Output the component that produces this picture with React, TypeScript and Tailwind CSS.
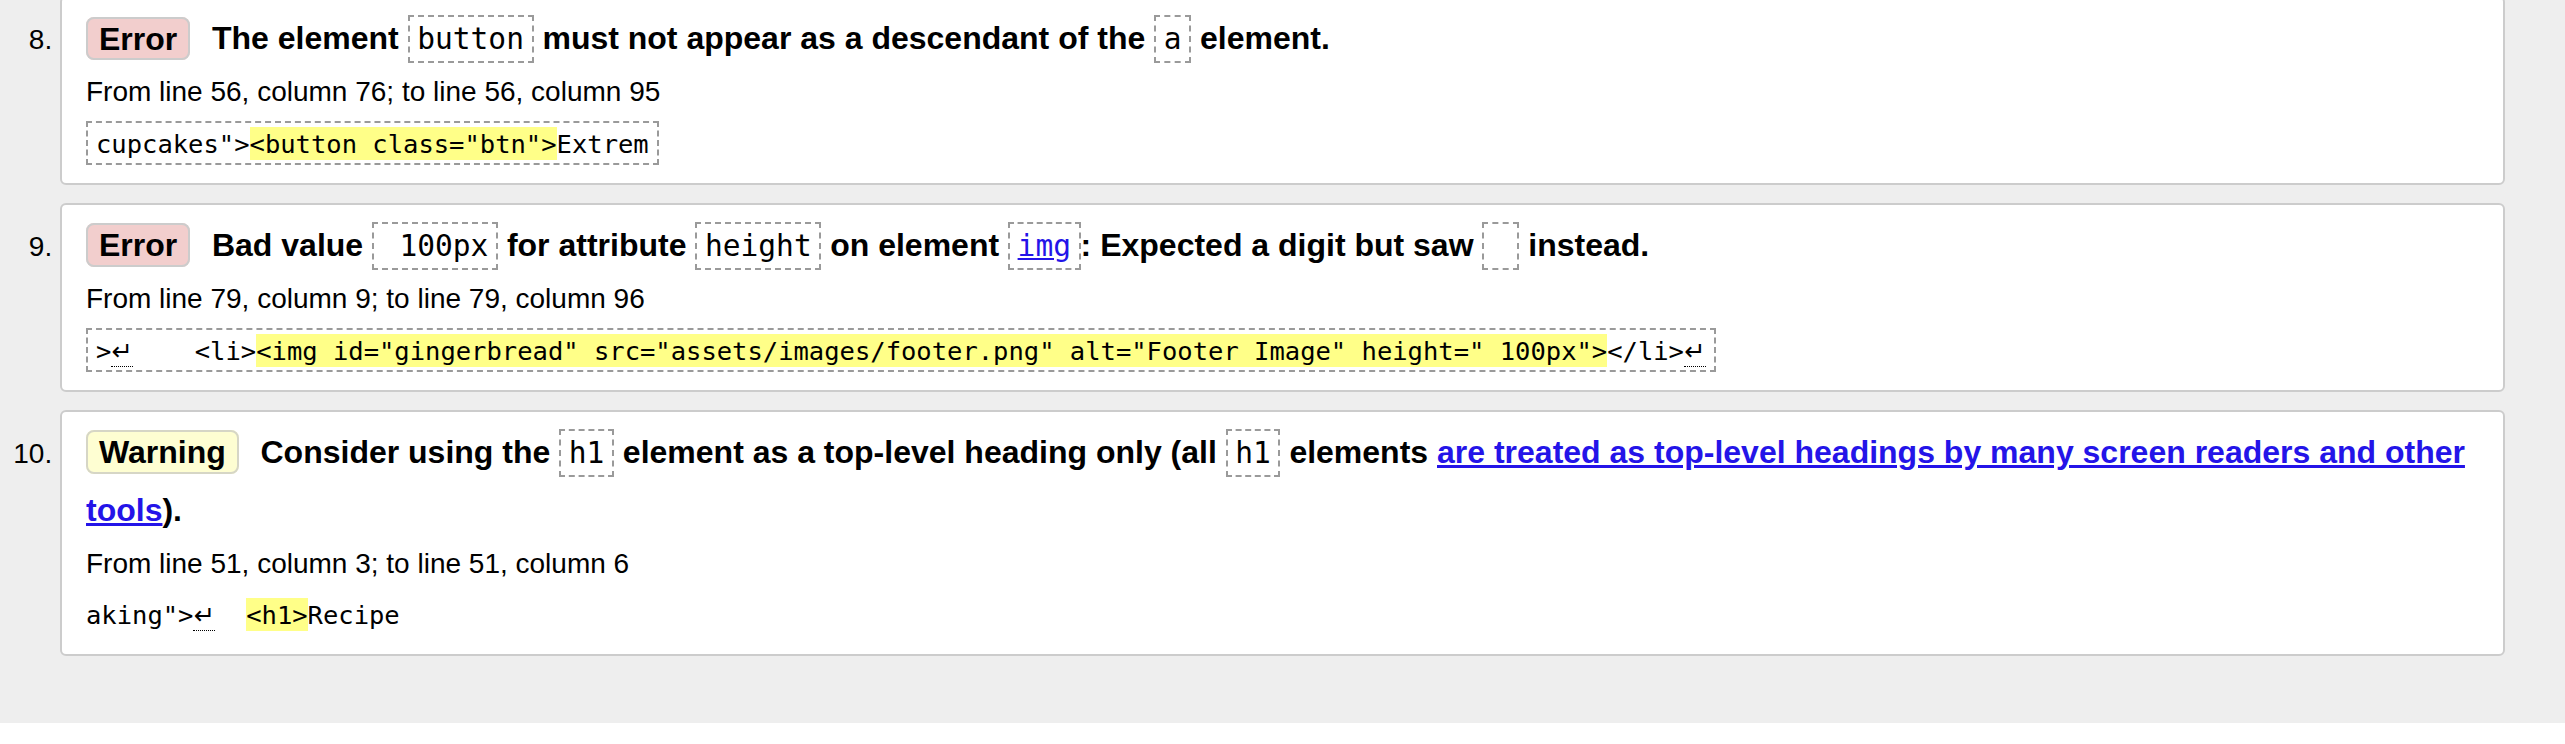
import React from "react";

const Badge = ({ kind }: { kind: "Error" | "Warning" }) => (
  <>
    <span
      className={
        kind === "Error"
          ? "mr-[12.8px] rounded-[8px] border-2 border-[#cccccc] bg-[#f2cecd] px-[11px] pt-[1.7px] pb-[2.2px]"
          : "mr-[12.8px] rounded-[8px] border-2 border-[#d6d6c6] bg-[#fefed2] px-[11px] pt-[1.7px] pb-[2.2px]"
      }
    >
      {kind}
    </span>{" "}
  </>
);

const Code = ({ children }: { children: React.ReactNode }) => (
  <code className="whitespace-pre border-2 border-dashed border-[#9a9a9a] px-[7.6px] pt-[5px] pb-[5px] font-['DejaVu_Sans_Mono',monospace] text-[29.57px] font-normal leading-none">
    {children}
  </code>
);

const HL = ({ children }: { children: React.ReactNode }) => (
  <span className="bg-[#ffff88] pt-[2px] pb-[0.7px] leading-none">{children}</span>
);

const LF = () => (
  <span className="inline-block w-[22px] overflow-visible border-b-[1.5px] border-dotted border-black font-['DejaVu_Sans',sans-serif] text-[25.5px] leading-[29px]">
    ↵
  </span>
);

const Box = ({ children }: { children: React.ReactNode }) => (
  <span className="border-2 border-dashed border-[#9a9a9a] px-[8px] pt-[5.7px] pb-[4.6px] leading-none">
    {children}
  </span>
);

const Card = ({
  heading,
  from,
  extract,
}: {
  heading: React.ReactNode;
  from: string;
  extract: React.ReactNode;
}) => (
  <li className="rounded-[6px] border-2 border-[#cccccc] bg-white pl-[24px] pr-[5px] pt-[12.2px] pb-[18.8px] text-[28px]">
    <p className="text-[32px] font-bold leading-[57.4px]">{heading}</p>
    <p className="mt-[4.7px] leading-[40px]">{from}</p>
    <p className="mt-[11.58px] whitespace-pre font-['DejaVu_Sans_Mono',monospace] text-[25.5px] leading-[40px]">
      {extract}
    </p>
  </li>
);

export default function App() {
  return (
    <div className="-mt-[4px] bg-[#eeeeee] pb-[66.6px] font-['Liberation_Sans',Arial,sans-serif] text-black">
      <ol start={8} className="mx-[60px] list-decimal space-y-[18.3px]">
        <Card
          heading={
            <>
              <Badge kind="Error" />
              The element <Code>button</Code> must not appear as a descendant of the <Code>a</Code> element.
            </>
          }
          from="From line 56, column 76; to line 56, column 95"
          extract={
            <Box>
              {'cupcakes">'}
              <HL>{'<button class="btn">'}</HL>
              {"Extrem"}
            </Box>
          }
        />
        <Card
          heading={
            <>
              <Badge kind="Error" />
              Bad value <Code>{" 100px"}</Code> for attribute <Code>height</Code> on element{" "}
              <Code>
                <a href="#" className="text-[#2414e8] underline">
                  img
                </a>
              </Code>
              : Expected a digit but saw <Code>{" "}</Code> instead.
            </>
          }
          from="From line 79, column 9; to line 79, column 96"
          extract={
            <Box>
              {">"}
              <LF />
              {"    <li>"}
              <HL>{'<img id="gingerbread" src="assets/images/footer.png" alt="Footer Image" height=" 100px">'}</HL>
              {"</li>"}
              <LF />
            </Box>
          }
        />
        <Card
          heading={
            <>
              <Badge kind="Warning" />
              Consider using the <Code>h1</Code> element as a top-level heading only (all <Code>h1</Code> elements{" "}
              <a href="#" className="text-[#2414e8] underline">
                are treated as top-level headings by many screen readers and other
                <br />
                tools
              </a>
              ).
            </>
          }
          from="From line 51, column 3; to line 51, column 6"
          extract={
            <>
              {'aking">'}
              <LF />
              {"  "}
              <HL>{"<h1>"}</HL>
              {"Recipe"}
            </>
          }
        />
      </ol>
    </div>
  );
}
